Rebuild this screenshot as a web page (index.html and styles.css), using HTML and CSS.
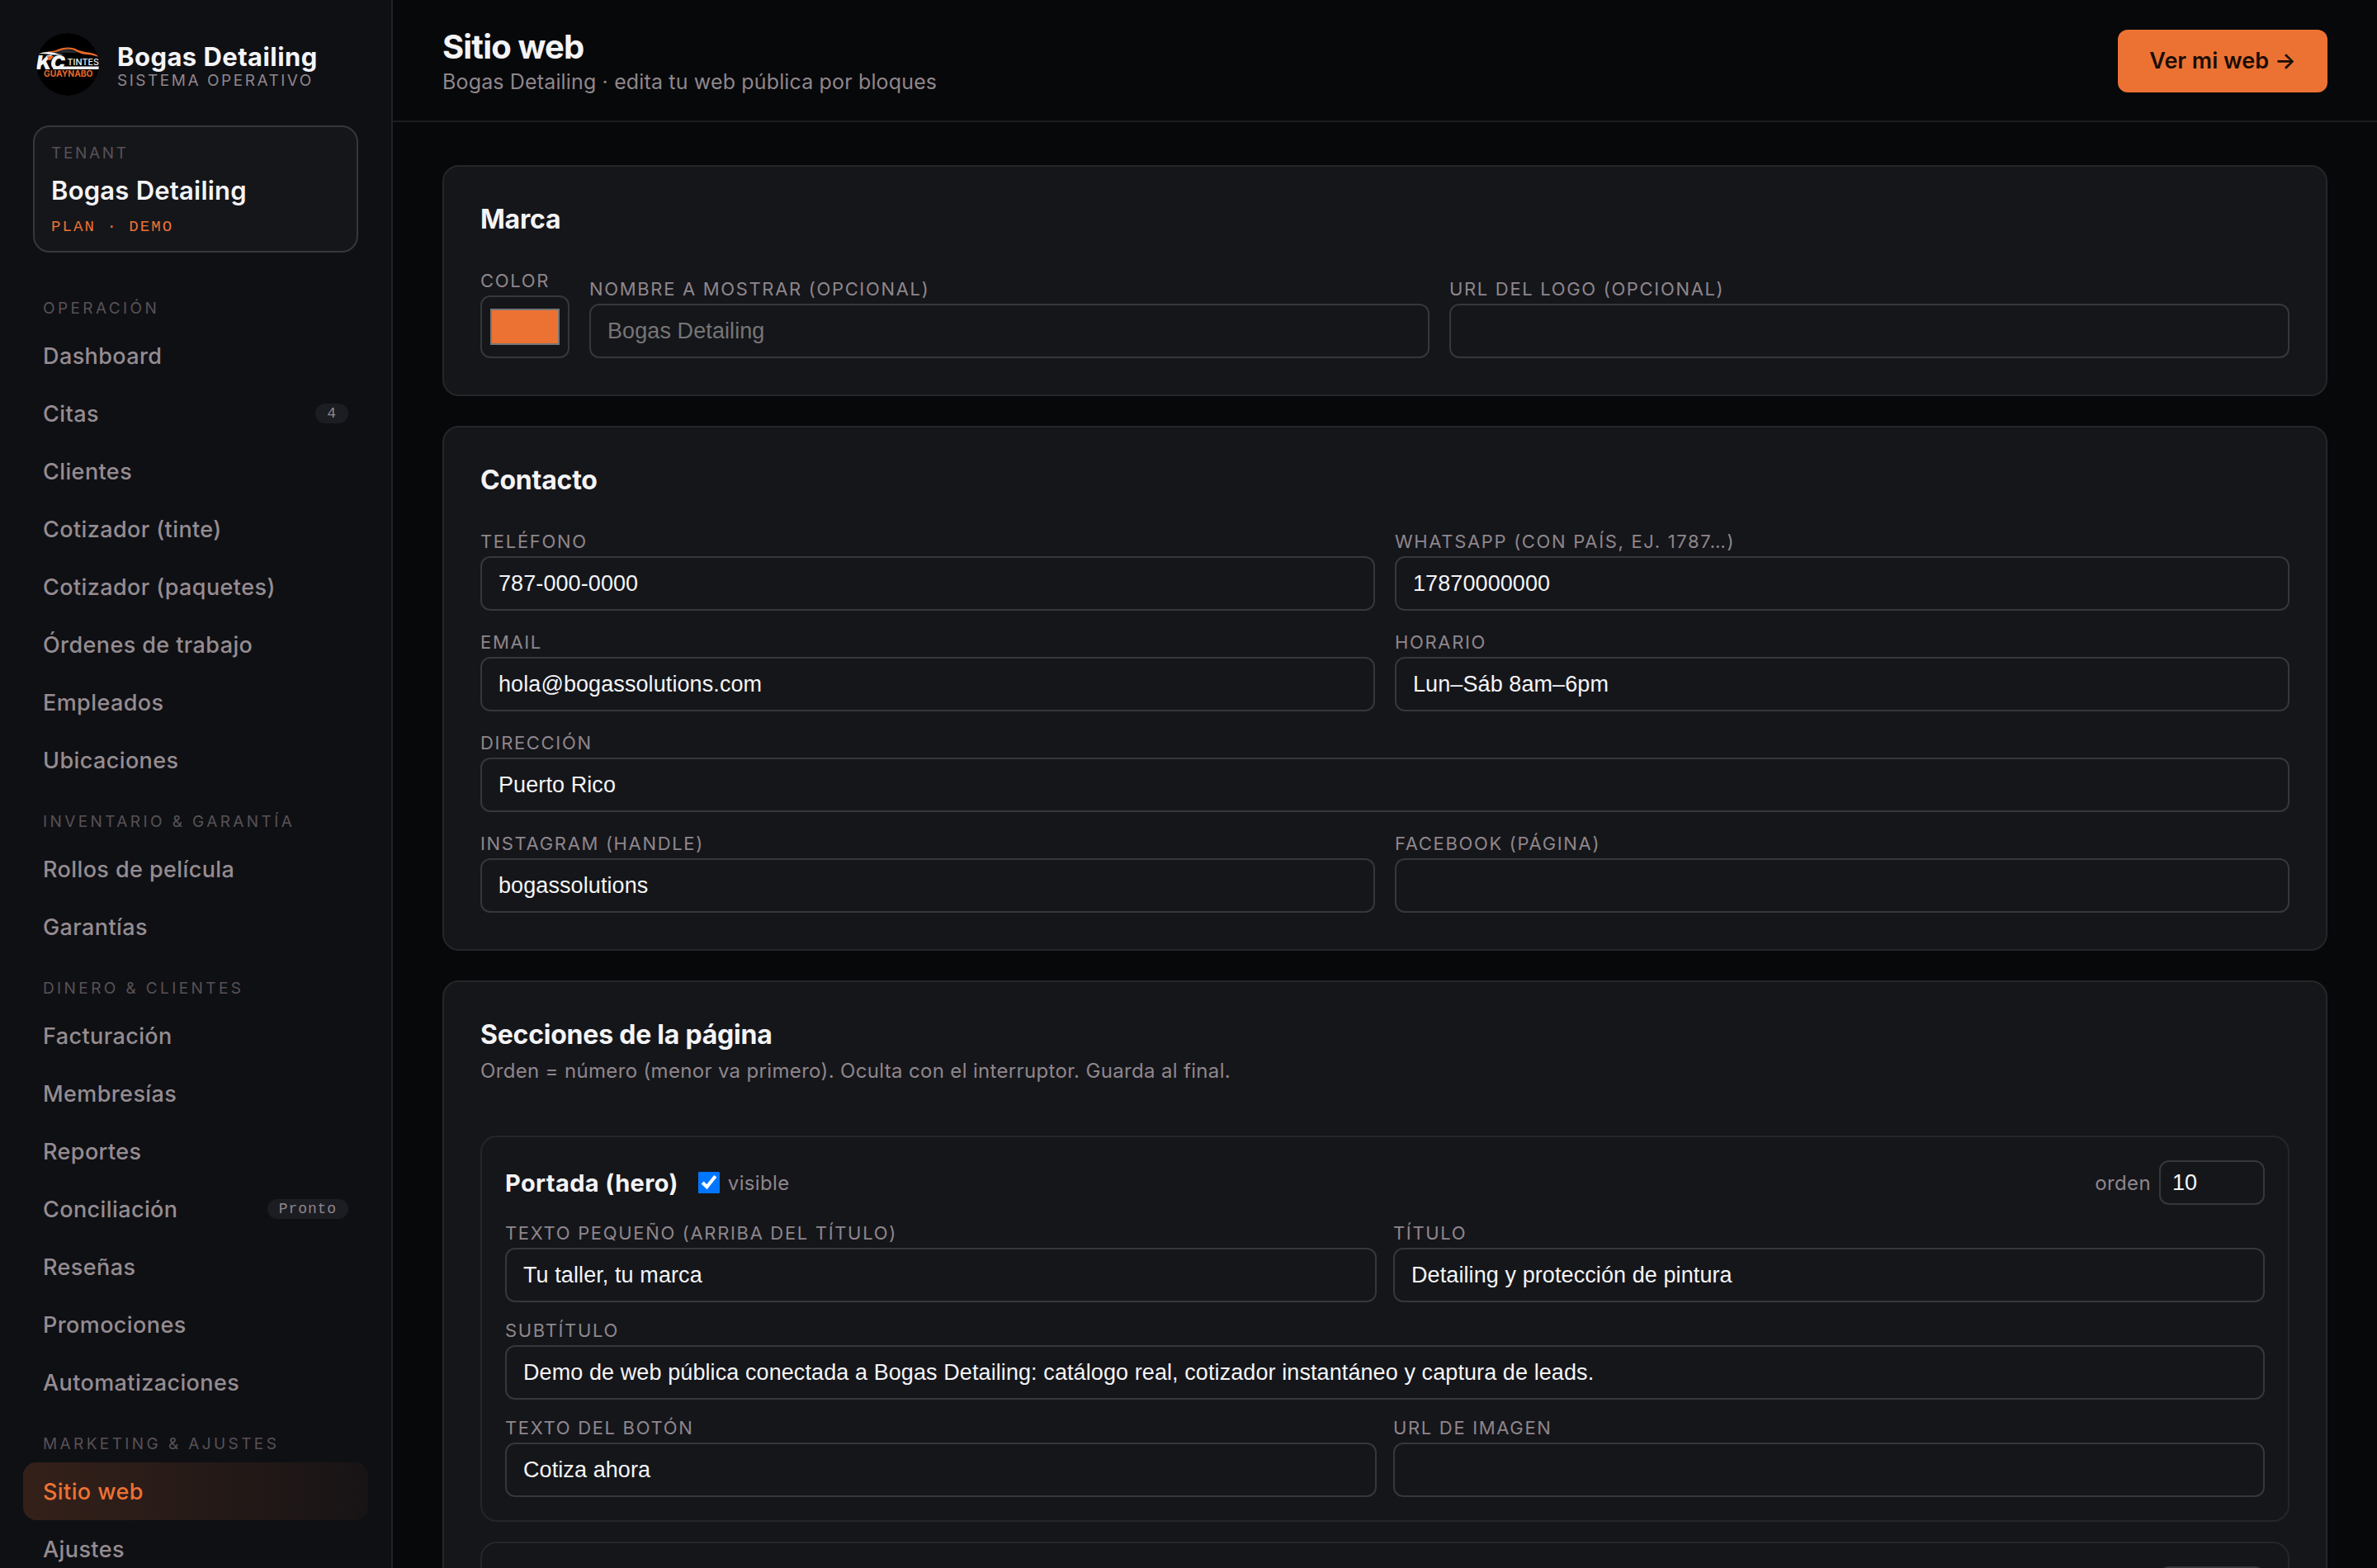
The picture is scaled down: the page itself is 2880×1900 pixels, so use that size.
FILE: index.html
```html
<!DOCTYPE html>
<html lang="es">
<head>
    <meta charset="UTF-8">
    <meta name="viewport" content="width=device-width, initial-scale=1.0">
    <title>Sitio web - Bogas Detailing</title>
    <link rel="stylesheet" href="styles.css">
</head>
<body>
    <div class="app">
        <aside class="sidebar">
            <div class="brand">
                <svg class="brand-logo" viewBox="0 0 76 76">
                    <defs>
                        <clipPath id="logoClip"><circle cx="38" cy="38" r="38"/></clipPath>
                    </defs>
                    <g clip-path="url(#logoClip)">
                        <circle cx="38" cy="38" r="38" fill="#000"/>
                        <path d="M18 24 Q28 18.5 38 19.5 Q45 20.5 51 24 Z" fill="#26282b"/>
                        <path d="M12 22.5 Q22 22.5 27 19.5 Q36 16 46 18.5 Q52 22 59 23 Q72 24 76 29 Q66 25.8 56 25.4 Q49 22.7 44 20.2 Q36 18.4 29 21.2 Q23 24.4 12 22.5Z" fill="#e8692a"/>
                        <path d="M2 25.4 Q12 21.6 22 24 Q28 26 33 26 Q20 27.4 13 25.4 Q8 24.8 2 25.4Z" fill="#f4f4f4"/>
                        <text x="0" y="44" class="logo-kc" textLength="35" lengthAdjust="spacingAndGlyphs">KC</text>
                        <path d="M13 28 H21.5 L17 33 H14.5Z" fill="#e8692a"/>
                        <text x="37.5" y="39.4" class="logo-tintes" textLength="38.5" lengthAdjust="spacingAndGlyphs">TINTES</text>
                        <path d="M22 40.4 H76 V44 H20Z" fill="#f4f4f4"/>
                        <text x="9" y="53" class="logo-city" textLength="59.5" lengthAdjust="spacingAndGlyphs">GUAYNABO</text>
                    </g>
                </svg>
                <div class="brand-text">
                    <div class="brand-name">Bogas Detailing</div>
                    <div class="brand-sub">SISTEMA OPERATIVO</div>
                </div>
            </div>

            <div class="tenant">
                <div class="tenant-label">TENANT</div>
                <div class="tenant-name">Bogas Detailing</div>
                <div class="tenant-plan">PLAN · DEMO</div>
            </div>

            <nav class="nav">
                <div class="nav-label">OPERACIÓN</div>
                <a class="nav-item">Dashboard</a>
                <a class="nav-item">Citas <span class="pill">4</span></a>
                <a class="nav-item">Clientes</a>
                <a class="nav-item">Cotizador (tinte)</a>
                <a class="nav-item">Cotizador (paquetes)</a>
                <a class="nav-item">Órdenes de trabajo</a>
                <a class="nav-item">Empleados</a>
                <a class="nav-item">Ubicaciones</a>

                <div class="nav-label">INVENTARIO &amp; GARANTÍA</div>
                <a class="nav-item">Rollos de película</a>
                <a class="nav-item">Garantías</a>

                <div class="nav-label">DINERO &amp; CLIENTES</div>
                <a class="nav-item">Facturación</a>
                <a class="nav-item">Membresías</a>
                <a class="nav-item">Reportes</a>
                <a class="nav-item">Conciliación <span class="pill">Pronto</span></a>
                <a class="nav-item">Reseñas</a>
                <a class="nav-item">Promociones</a>
                <a class="nav-item">Automatizaciones</a>

                <div class="nav-label">MARKETING &amp; AJUSTES</div>
                <a class="nav-item active">Sitio web</a>
                <a class="nav-item">Ajustes</a>
            </nav>
        </aside>

        <main class="main">
            <header class="topbar">
                <div>
                    <h1>Sitio web</h1>
                    <p class="topbar-sub">Bogas Detailing · edita tu web pública por bloques</p>
                </div>
                <a class="btn">Ver mi web →</a>
            </header>

            <form class="content">
                <section class="card">
                    <div class="card-head"><h2>Marca</h2></div>
                    <div class="brand-grid">
                        <label class="field"><span>COLOR</span><input type="color" class="color" value="#ec7234"></label>
                        <label class="field"><span>NOMBRE A MOSTRAR (OPCIONAL)</span><input type="text" class="input" placeholder="Bogas Detailing"></label>
                        <label class="field"><span>URL DEL LOGO (OPCIONAL)</span><input type="text" class="input"></label>
                    </div>
                </section>

                <section class="card">
                    <div class="card-head"><h2>Contacto</h2></div>
                    <div class="grid">
                        <label class="field"><span>TELÉFONO</span><input type="text" class="input" value="787-000-0000"></label>
                        <label class="field"><span>WHATSAPP (CON PAÍS, EJ. 1787…)</span><input type="text" class="input" value="17870000000"></label>
                        <label class="field"><span>EMAIL</span><input type="text" class="input" value="hola@bogassolutions.com"></label>
                        <label class="field"><span>HORARIO</span><input type="text" class="input" value="Lun–Sáb 8am–6pm"></label>
                        <label class="field full"><span>DIRECCIÓN</span><input type="text" class="input" value="Puerto Rico"></label>
                        <label class="field"><span>INSTAGRAM (HANDLE)</span><input type="text" class="input" value="bogassolutions"></label>
                        <label class="field"><span>FACEBOOK (PÁGINA)</span><input type="text" class="input"></label>
                    </div>
                </section>

                <section class="card">
                    <div class="card-head">
                        <h2>Secciones de la página</h2>
                        <p class="card-sub">Orden = número (menor va primero). Oculta con el interruptor. Guarda al final.</p>
                    </div>
                    <div class="blocks">
                        <div class="block">
                            <div class="block-head">
                                <strong class="block-name">Portada (hero)</strong>
                                <label class="visible"><input type="checkbox" checked>visible</label>
                                <label class="order">orden<input type="number" value="10"></label>
                            </div>
                            <div class="grid grid-tight">
                                <label class="field"><span>TEXTO PEQUEÑO (ARRIBA DEL TÍTULO)</span><input type="text" class="input" value="Tu taller, tu marca"></label>
                                <label class="field"><span>TÍTULO</span><input type="text" class="input" value="Detailing y protección de pintura"></label>
                                <label class="field full"><span>SUBTÍTULO</span><input type="text" class="input" value="Demo de web pública conectada a Bogas Detailing: catálogo real, cotizador instantáneo y captura de leads."></label>
                                <label class="field"><span>TEXTO DEL BOTÓN</span><input type="text" class="input" value="Cotiza ahora"></label>
                                <label class="field"><span>URL DE IMAGEN</span><input type="text" class="input"></label>
                            </div>
                        </div>
                        <div class="block">
                            <div class="block-head">
                                <label class="order"><input type="number"></label>
                            </div>
                        </div>
                    </div>
                </section>
            </form>
        </main>
    </div>
</body>
</html>
```

FILE: styles.css
```css
:root {
    --bg: #07080a;
    --sidebar: #0f1014;
    --card: #15161a;
    --line: #25262a;
    --line-strong: #36373b;
    --text: #f4f4f6;
    --muted: #8f868c;
    --faint: #585156;
    --accent: #ec7234;
}

* {
    margin: 0;
    padding: 0;
    box-sizing: border-box;
}

body {
    font-family: Inter, sans-serif;
    background: var(--bg);
    color: var(--text);
}

.app {
    display: flex;
    height: 1900px;
    overflow: hidden;
}

/* Sidebar */
.sidebar {
    width: 476px;
    flex-shrink: 0;
    padding-top: 40px;
    background: var(--sidebar);
    border-right: 2px solid #222327;
}

.brand {
    display: flex;
    align-items: center;
    gap: 22px;
    padding-left: 44px;
    margin-bottom: 36px;
}

.brand-logo {
    width: 76px;
    height: 76px;
}

.logo-kc {
    font: italic 900 23px Inter, sans-serif;
    fill: #f4f4f4;
}

.logo-tintes {
    font: 500 11px Inter, sans-serif;
    fill: #f4f4f4;
}

.logo-city {
    font: 700 10px Inter, sans-serif;
    fill: #e8692a;
}

.brand-name {
    font-size: 31px;
    font-weight: 700;
    line-height: 38px;
    letter-spacing: 0.014em;
}

.brand-sub {
    font-size: 19px;
    line-height: 19px;
    letter-spacing: 0.133em;
    color: var(--muted);
}

.tenant {
    margin: 0 40px 28px;
    padding: 21px 20px 17px;
    background: var(--card);
    border: 2px solid var(--line-strong);
    border-radius: 20px;
}

.tenant-label {
    font-size: 19px;
    line-height: 22px;
    letter-spacing: 0.14em;
    color: var(--faint);
}

.tenant-name {
    margin-top: 15px;
    font-size: 31px;
    font-weight: 600;
    line-height: 38px;
    letter-spacing: 0.007em;
}

.tenant-plan {
    margin-top: 13px;
    font-family: "Liberation Mono", monospace;
    font-size: 19px;
    line-height: 24px;
    letter-spacing: 2.08px;
    color: var(--accent);
}

.nav {
    padding: 0 28px;
}

.nav-label {
    padding: 28px 24px 10px;
    font-size: 19px;
    line-height: 24px;
    letter-spacing: 0.179em;
    color: var(--faint);
}

.nav-item {
    display: flex;
    align-items: center;
    justify-content: space-between;
    height: 70px;
    padding: 0 24px;
    border-radius: 16px;
    font-size: 27px;
    font-weight: 500;
    letter-spacing: 0.015em;
    color: #958c91;
}

.nav-item.active {
    background: linear-gradient(90deg, rgba(236, 114, 52, 0.17), rgba(236, 114, 52, 0.04));
    color: var(--accent);
}

.pill {
    padding: 0 14px;
    border-radius: 12px;
    background: #1c1d22;
    font-family: "Liberation Mono", monospace;
    font-size: 18px;
    font-weight: 400;
    line-height: 24px;
    letter-spacing: 0.9px;
    color: var(--muted);
}

/* Main column */
.main {
    flex: 1;
}

.topbar {
    display: flex;
    align-items: center;
    justify-content: space-between;
    height: 148px;
    padding: 2px 60px 0;
    border-bottom: 2px solid #1b1c1f;
}

h1 {
    font-size: 40px;
    font-weight: 700;
    line-height: 50px;
    letter-spacing: -0.021em;
}

.topbar-sub {
    font-size: 25px;
    line-height: 34px;
    letter-spacing: 0.006em;
    color: var(--muted);
}

.btn {
    width: 254px;
    border-radius: 12px;
    background: var(--accent);
    color: #1a0d04;
    font-size: 27px;
    font-weight: 600;
    line-height: 76px;
    text-align: center;
}

.content {
    display: flex;
    flex-direction: column;
    gap: 36px;
    padding: 52px 60px;
}

.card {
    padding: 44px;
    background: var(--card);
    border: 2px solid var(--line);
    border-radius: 20px;
}

.card-head {
    margin-bottom: 40px;
}

h2 {
    font-size: 32px;
    font-weight: 700;
    line-height: 40px;
    letter-spacing: -0.007em;
}

.card-sub {
    margin-top: 6px;
    font-size: 24px;
    line-height: 36px;
    letter-spacing: 0.014em;
    color: var(--muted);
}

/* Form fields */
.brand-grid {
    display: grid;
    grid-template-columns: 108px 1fr 1fr;
    gap: 24px;
    align-items: end;
}

.grid {
    display: grid;
    grid-template-columns: 1fr 1fr;
    gap: 24px;
}

.grid-tight {
    gap: 20px;
}

.full {
    grid-column: 1 / -1;
}

.field {
    display: flex;
    flex-direction: column;
    gap: 4px;
    font-size: 22px;
    line-height: 28px;
    letter-spacing: 0.076em;
    color: var(--muted);
}

.input {
    width: 100%;
    height: 66px;
    padding: 0 20px;
    background: transparent;
    border: 2px solid var(--line-strong);
    border-radius: 12px;
    color: var(--text);
    font-family: "Liberation Sans", Arial, sans-serif;
    font-size: 27px;
    letter-spacing: 0.09px;
}

.input::placeholder {
    color: #757575;
}

.color {
    width: 108px;
    height: 76px;
    padding: 14px 10px;
    background: transparent;
    border: 2px solid var(--line-strong);
    border-radius: 12px;
}

.color::-webkit-color-swatch-wrapper {
    padding: 0;
}

.color::-webkit-color-swatch {
    border: 2px solid #777;
    border-radius: 0;
}

/* Page blocks */
.blocks {
    display: flex;
    flex-direction: column;
    gap: 24px;
    padding-top: 20px;
}

.block {
    padding: 28px;
    border: 2px solid var(--line);
    border-radius: 20px;
}

.blocks .block-head {
    display: flex;
    align-items: center;
    gap: 24px;
    margin-bottom: 20px;
}

.block-name {
    font-size: 29px;
    font-weight: 700;
    letter-spacing: 0.013em;
}

.visible,
.order {
    display: flex;
    align-items: center;
    gap: 10px;
    font-size: 24px;
    letter-spacing: 0.015em;
    color: var(--muted);
}

.visible input {
    width: 26px;
    height: 26px;
}

.order {
    margin-left: auto;
}

.order input {
    width: 128px;
    height: 54px;
    padding: 0 14px;
    background: transparent;
    border: 2px solid var(--line-strong);
    border-radius: 12px;
    color: var(--text);
    font-family: "Liberation Sans", Arial, sans-serif;
    font-size: 27px;
}
```
